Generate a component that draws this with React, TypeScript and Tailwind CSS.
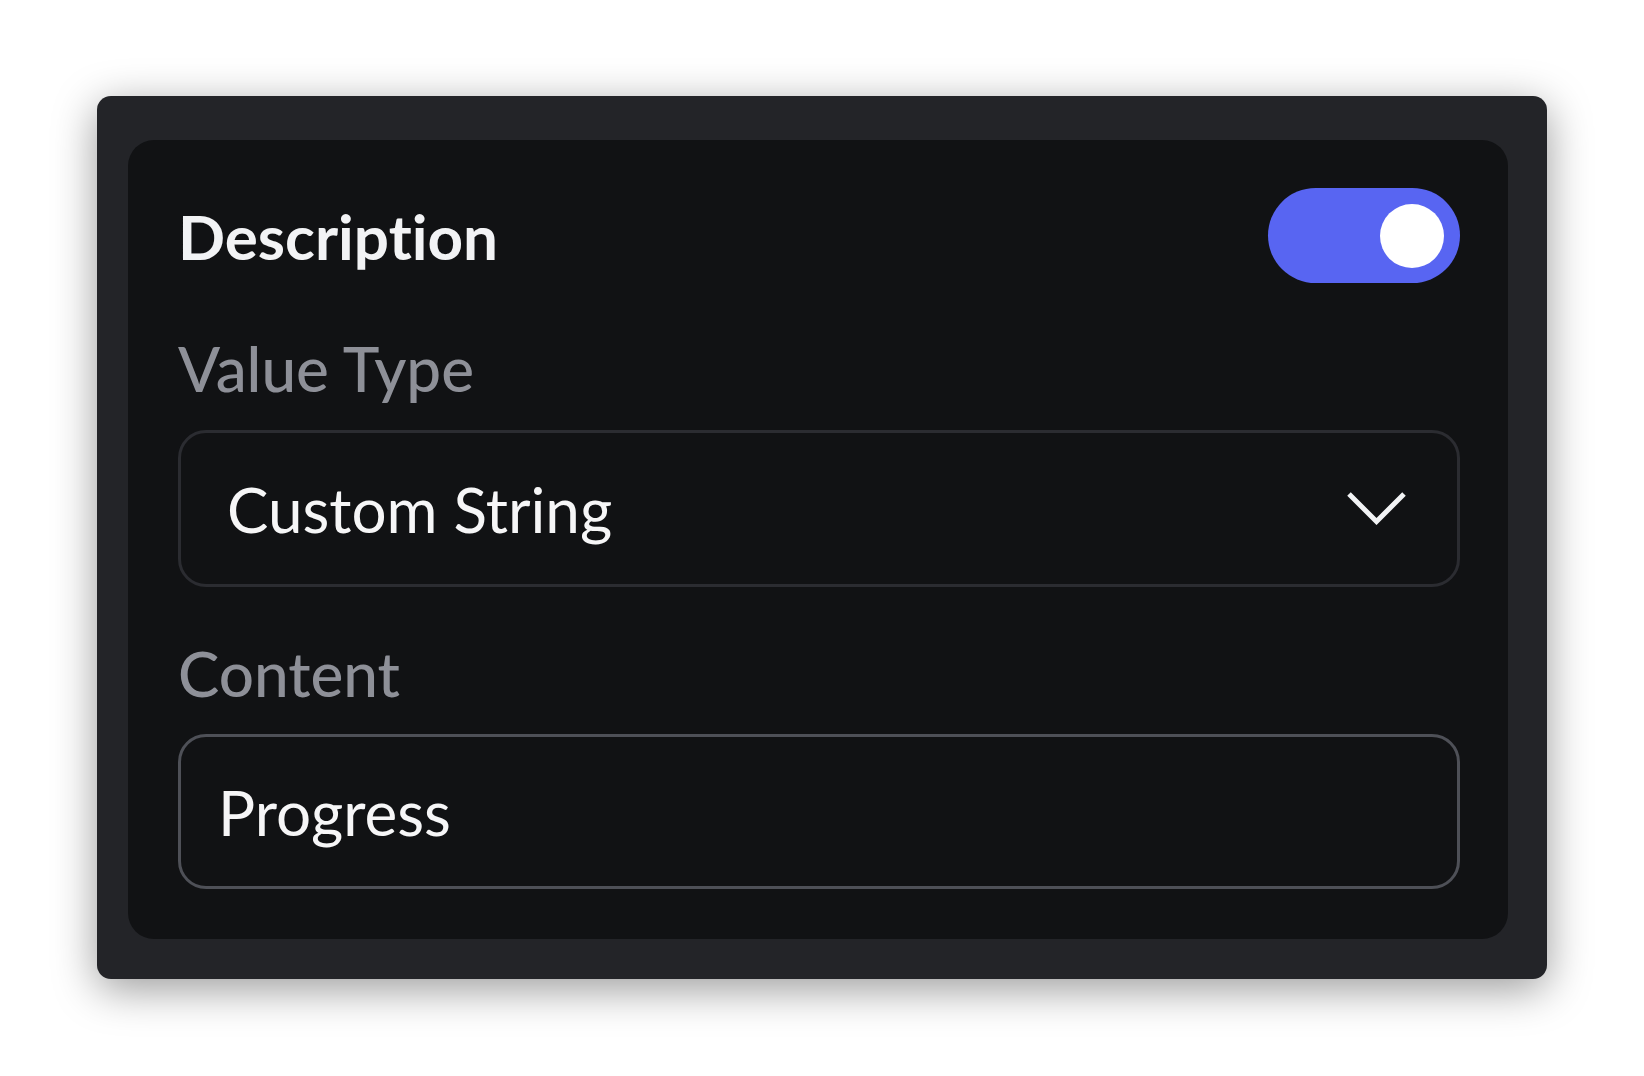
import { useState } from 'react'

const font = { fontFamily: 'Lato, "Noto Sans", sans-serif' }

function Toggle({ on, onChange }: { on: boolean; onChange: (v: boolean) => void }) {
  return (
    <button
      type="button"
      onClick={() => onChange(!on)}
      className={`flex h-[95px] w-[192px] shrink-0 items-center rounded-full px-[16px] ${
        on ? 'justify-end bg-[#5865f2]' : 'justify-start bg-[#4e5058]'
      }`}
    >
      <span className="block h-[64px] w-[64px] rounded-full bg-white" />
    </button>
  )
}

function Chevron() {
  return (
    <svg width="59" height="33" viewBox="0 0 59 33" fill="none" className="shrink-0">
      <polyline points="2,2 29.5,29.5 57,2" stroke="#f2f3f5" strokeWidth="5" />
    </svg>
  )
}

export default function App() {
  const [enabled, setEnabled] = useState(true)
  const [content, setContent] = useState('Progress')

  return (
    <div className="min-h-screen bg-white pl-[97px] pt-[96px] [font-variant-ligatures:none]" style={font}>
      <div className="w-[1450px] rounded-[14px] bg-[#232428] pb-[40px] pl-[31px] pr-[39px] pt-[44px] shadow-[0_10px_44px_rgba(0,0,0,0.4)]">
        <div className="rounded-[26px] bg-[#111214] pb-[50px] pl-[50px] pr-[48px] pt-[48px]">
          <div className="flex h-[95px] items-center justify-between">
            <h2 className="text-[62px] font-bold leading-[62px] text-[#f2f3f5] [font-variant-ligatures:none]">
              Description
            </h2>
            <Toggle on={enabled} onChange={setEnabled} />
          </div>

          <p className="mt-[54px] text-[62px] font-medium leading-[62px] text-[#8e9098]">Value Type</p>
          <button
            type="button"
            className="mt-[31px] flex h-[157px] w-full items-center justify-between rounded-[28px] border-[3px] border-[#2b2c31] pl-[46px] pr-[51px]"
          >
            <span className="text-[62px] leading-[62px] text-[#f6f6f7]">Custom String</span>
            <Chevron />
          </button>

          <p className="mt-[55px] text-[62px] font-medium leading-[62px] text-[#8e9098]">Content</p>
          <div className="mt-[30px] flex h-[155px] items-center rounded-[28px] border-[3px] border-[#4e5057] pl-[37px] pr-[40px]">
            <input
              value={content}
              onChange={(e) => setContent(e.target.value)}
              className="w-full bg-transparent text-[62px] leading-[62px] text-[#f6f6f7] outline-none"
              style={font}
            />
          </div>
        </div>
      </div>
    </div>
  )
}
